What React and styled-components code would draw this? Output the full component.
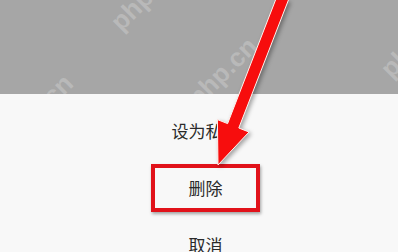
import styled, { createGlobalStyle } from "styled-components";

const Global = createGlobalStyle`
    html, body {
        margin: 0;
        padding: 0;
        width: 398px;
        height: 252px;
        overflow: hidden;
        background: #f8f8f8;
    }
`

const Screen = styled.div`
    position: relative;
    width: 398px;
    height: 252px;
    overflow: hidden;
    display: flex;
    flex-direction: column;
    font-family: "Noto Sans CJK SC", "Noto Sans", sans-serif;
`

const Backdrop = styled.div`
    position: relative;
    height: 94px;
    flex-shrink: 0;
    overflow: hidden;
    background: #a6a6a6;
`

const Sheet = styled.div`
    flex: 1;
    background: #f8f8f8;
    display: flex;
    flex-direction: column;
    align-items: center;
    padding: 8px 0 0 13px;
`

const Row = styled.div`
    height: 57px;
    flex-shrink: 0;
    display: flex;
    align-items: center;
    justify-content: center;
    font-size: 17px;
    color: #2a2a2a;
`

const Marked = styled.span`
    box-sizing: border-box;
    width: 109px;
    height: 48px;
    border: 4px solid #e1121a;
    box-shadow: 1px 2px 3px rgba(0, 0, 0, 0.35);
    display: flex;
    align-items: center;
    justify-content: center;
`

// faint site watermark over the dimmed backdrop
const Watermark = styled.span`
    position: absolute;
    left: ${({ x }) => x}px;
    top: ${({ y }) => y}px;
    transform: rotate(-45deg);
    transform-origin: left center;
    font-family: "Liberation Sans", sans-serif;
    font-size: 26px;
    font-weight: bold;
    line-height: 26px;
    color: rgba(255, 255, 255, 0.22);
    white-space: nowrap;
    pointer-events: none;
`

const Arrow = styled.svg`
    position: absolute;
    inset: 0;
    filter: drop-shadow(2px 2px 2px rgba(0, 0, 0, 0.35));
`

const App = () => {
    return (
        <Screen>
            <Global />
            <Backdrop>
                <Watermark x={115} y={13}>php.cn</Watermark>
                <Watermark x={192} y={89}>php.cn</Watermark>
                <Watermark x={385} y={60}>php.cn</Watermark>
                <Watermark x={8} y={126}>php.cn</Watermark>
            </Backdrop>
            <Sheet>
                <Row>设为私密</Row>
                <Row><Marked>删除</Marked></Row>
                <Row>取消</Row>
            </Sheet>
            <Arrow width="398" height="252" viewBox="0 0 398 252">
                <polygon
                    points="284.7,-23.6 227.6,123.6 217.4,119.6 218,165 249,132 238.8,128 295.9,-19.2"
                    fill="#f70d0d"
                    stroke="#fff3ee"
                    strokeWidth="1"
                    strokeLinejoin="miter"
                />
            </Arrow>
        </Screen>
    )
}

export default App
